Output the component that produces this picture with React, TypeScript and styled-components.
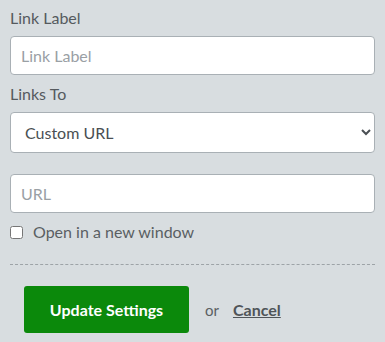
import React from 'react';
import styled, {createGlobalStyle} from 'styled-components';

const GlobalStyle = createGlobalStyle`
    html, body {
        margin: 0;
        padding: 0;
        background: #d8dde0;
    }
    body {
        font-family: Lato, "Liberation Sans", sans-serif;
        color: #555a5e;
    }
`;

const Form = styled.form`
    display: flex;
    flex-direction: column;
    padding: 8px 10px 9px;
`;

const Label = styled.label`
    display: block;
    font-size: 16px;
    line-height: 20px;
    margin-bottom: 8px;
`;

const Field = styled.div<{$gap?: number}>`
    display: flex;
    flex-direction: column;
    margin-bottom: ${p => p.$gap ?? 9}px;
`;

const TextInput = styled.input`
    box-sizing: border-box;
    width: 100%;
    height: 39px;
    padding: 0 10px;
    border: 1px solid #a9b0b5;
    border-radius: 4px;
    background: #fff;
    font-family: inherit;
    font-size: 16px;
    color: #444;
    outline: none;

    &::placeholder {
        color: #9aa0a5;
    }
`;

const Select = styled.select`
    box-sizing: border-box;
    width: 100%;
    height: 41px;
    padding: 0 10px;
    border: 1px solid #a9b0b5;
    border-radius: 4px;
    background: #fff;
    font-family: inherit;
    font-size: 16px;
    color: #4a4f53;
    outline: none;
`;

const CheckRow = styled.label`
    display: flex;
    align-items: center;
    gap: 10px;
    margin-top: 9px;
    font-size: 16px;
    line-height: 20px;
    color: #5a5f63;
`;

const Checkbox = styled.input`
    margin: 0;
    width: 13px;
    height: 13px;
`;

const Divider = styled.hr`
    margin: 22px 0 0;
    border: 0;
    border-top: 1px dashed #9da3a7;
    height: 0;
`;

const Actions = styled.div`
    display: flex;
    align-items: center;
    padding: 21px 14px 0;
`;

const PrimaryButton = styled.button`
    width: 165px;
    height: 47px;
    border: 0;
    border-radius: 3px;
    background: #0b890b;
    color: #fff;
    font-family: inherit;
    font-weight: 700;
    font-size: 16px;
    cursor: pointer;
`;

const Or = styled.span`
    margin: 0 14px 0 16px;
    font-size: 15px;
    color: #5a5f63;
`;

const CancelLink = styled.a`
    font-size: 16px;
    font-weight: 700;
    color: #4f5458;
    text-decoration: underline;
    cursor: pointer;
`;

export default function App() {
    return (
        <>
            <GlobalStyle />
            <Form onSubmit={e => e.preventDefault()}>
                <Field>
                    <Label htmlFor="link-label">Link Label</Label>
                    <TextInput id="link-label" placeholder="Link Label" />
                </Field>
                <Field $gap={21}>
                    <Label htmlFor="links-to">Links To</Label>
                    <Select id="links-to" defaultValue="custom">
                        <option value="custom">Custom URL</option>
                    </Select>
                </Field>
                <TextInput placeholder="URL" />
                <CheckRow>
                    <Checkbox type="checkbox" />
                    Open in a new window
                </CheckRow>
                <Divider />
                <Actions>
                    <PrimaryButton type="submit">Update Settings</PrimaryButton>
                    <Or>or</Or>
                    <CancelLink>Cancel</CancelLink>
                </Actions>
            </Form>
        </>
    );
}
